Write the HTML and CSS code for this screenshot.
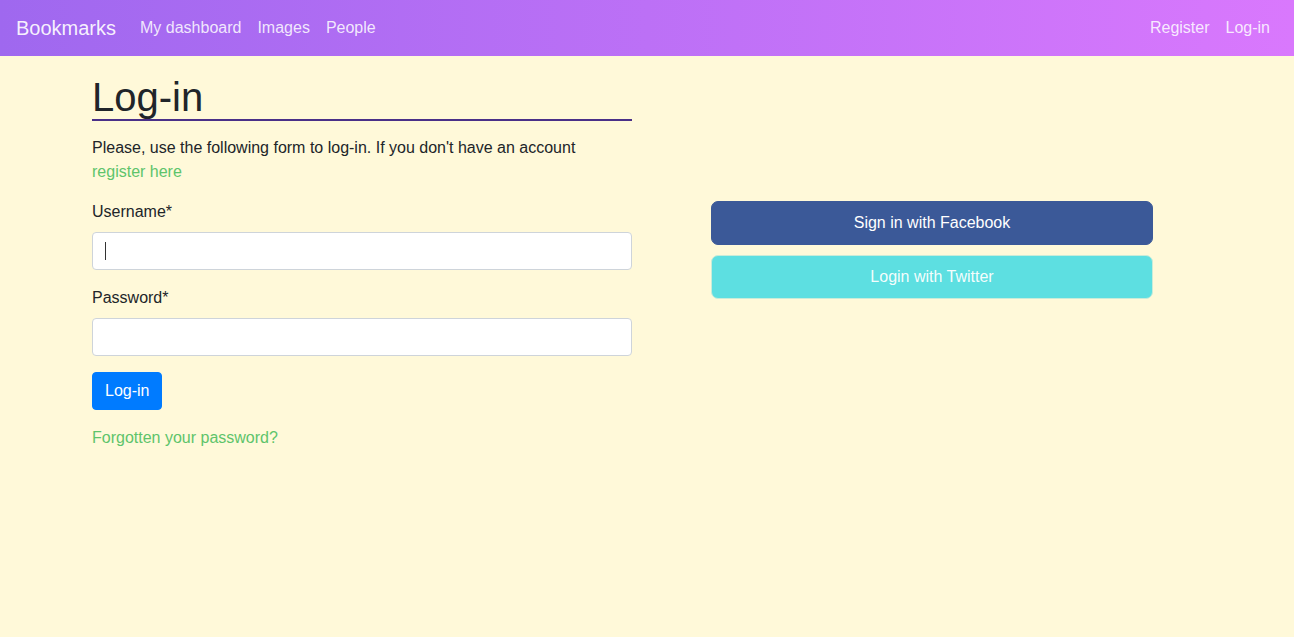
FILE: index.html
```
<!DOCTYPE html>
<html>
<head>
<meta charset="utf-8">
<title>Log-in</title>
<link rel="stylesheet" href="styles.css">
</head>
<body>
<nav class="navbar">
  <a class="brand" href="#">Bookmarks</a>
  <ul class="nav-links">
    <li><a href="#">My dashboard</a></li>
    <li><a href="#">Images</a></li>
    <li><a href="#">People</a></li>
  </ul>
  <ul class="nav-links nav-right">
    <li><a href="#">Register</a></li>
    <li><a href="#">Log-in</a></li>
  </ul>
</nav>
<main class="container">
  <div class="row">
    <section class="col">
      <h1 class="title">Log-in</h1>
      <p class="intro">Please, use the following form to log-in. If you don't have an account <a href="#">register here</a></p>
      <form class="form">
        <div class="form-group">
          <label for="username">Username*</label>
          <div class="input"><span class="caret"></span></div>
        </div>
        <div class="form-group">
          <label for="password">Password*</label>
          <div class="input"></div>
        </div>
        <button type="button" class="btn-primary">Log-in</button>
      </form>
      <p class="forgot"><a href="#">Forgotten your password?</a></p>
    </section>
    <section class="col col-social">
      <div class="social">
        <a class="btn-social btn-facebook" href="#">Sign in with Facebook</a>
        <a class="btn-social btn-twitter" href="#">Login with Twitter</a>
      </div>
    </section>
  </div>
</main>
</body>
</html>
```
FILE: styles.css
```
* { box-sizing: border-box; }
html, body { margin: 0; padding: 0; }
body {
  font-family: "Liberation Sans", Arial, sans-serif;
  font-size: 16px;
  line-height: 24px;
  color: #212529;
  background: #fff9d9;
  min-height: 637px;
}
a { text-decoration: none; }
.navbar {
  height: 56px;
  display: flex;
  align-items: center;
  padding: 0 16px;
  background: linear-gradient(to right, #9f68ef, #d978fd);
}
.brand {
  font-size: 20px;
  line-height: 30px;
  color: rgba(255,255,255,0.92);
  margin-right: 16px;
}
.nav-links {
  list-style: none;
  margin: 0;
  padding: 0;
  display: flex;
}
.nav-links a {
  display: block;
  padding: 8px;
  color: rgba(255,255,255,0.85);
}
.nav-right { margin-left: auto; }
.container {
  width: 1140px;
  margin: 0 auto;
  padding: 0 15px;
}
.row {
  display: flex;
  margin: 0 -15px;
}
.col {
  flex: 0 0 50%;
  padding: 0 15px;
}
.title {
  font-size: 40px;
  font-weight: 400;
  line-height: 44px;
  margin: 19px 0 0;
  border-bottom: 2px solid #4a3088;
}
.intro {
  margin: 15px 0 16px;
}
.intro a, .forgot a { color: #5ec46b; }
.form-group { margin-bottom: 16px; }
.form-group label {
  display: block;
  margin-bottom: 8px;
}
.input {
  height: 38px;
  background: #fff;
  border: 1px solid #ced4da;
  border-radius: 4px;
  display: flex;
  align-items: center;
  padding: 0 12px;
}
.caret {
  display: block;
  width: 1px;
  height: 18px;
  background: #333;
}
.btn-primary {
  display: block;
  height: 38px;
  padding: 0 12px;
  background: #007bff;
  color: #fff;
  border: 1px solid #007bff;
  border-radius: 4px;
  font-family: inherit;
  font-size: 16px;
}
.forgot { margin: 16px 0 0; }
.social {
  width: 442px;
  margin: 145px auto 0;
  display: flex;
  flex-direction: column;
  gap: 10px;
}
.btn-social {
  display: block;
  height: 44px;
  line-height: 42px;
  text-align: center;
  color: #fff;
  border-radius: 7px;
  font-size: 16px;
}
.btn-facebook {
  background: #3b5998;
  border: 1px solid #3b5998;
}
.btn-twitter {
  background: #5ddfe1;
  border: 1px solid #c9ecd9;
  color: rgba(255,255,255,0.95);
}
```
